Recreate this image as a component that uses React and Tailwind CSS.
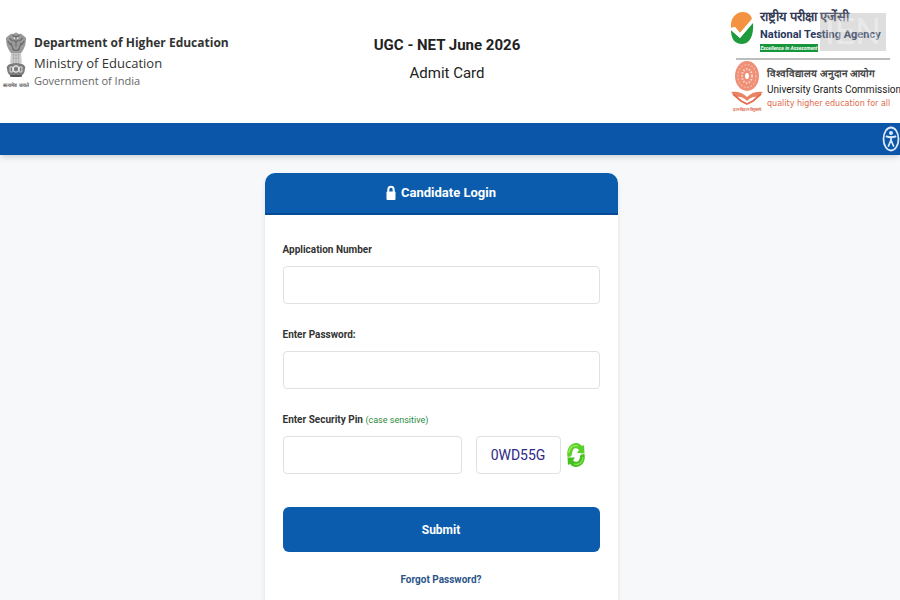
import { useState } from "react";

const captchaCode = "0WD55G";

const Emblem = () => (
  <svg viewBox="0 0 26 46" className="h-[46px] w-[22px]" preserveAspectRatio="none" aria-hidden="true">
    <path d="M5 3 Q8 1 10 2 Q13 -1 16 2 Q19 1 21 3 L25 6 L24 13 Q22 18 19 21 L7 21 Q4 18 2 13 L1 6Z" fill="#9a9a9a" />
    <path d="M9 3 Q13 7 17 3 M5 6 L9 9 M21 6 L17 9 M10 8 Q13 11 16 8 M13 10 V15 M7 11 L10 18 M19 11 L16 18 M3 9 L7 13 M23 9 L19 13" fill="none" stroke="#686868" strokeWidth="1.2" />
    <path d="M9 17 Q13 20 17 17" fill="none" stroke="#666" strokeWidth="1.2" />
    <circle cx="11" cy="6" r="1" fill="#ddd" />
    <circle cx="15" cy="6" r="1" fill="#ddd" />
    <path d="M7 21 H19 L20 31 H6Z" fill="#cfcfcf" />
    <path d="M8 23 H18 M9 26 H17 M10 21 V31 M13 21 V31 M16 21 V31" stroke="#a8a8a8" strokeWidth="0.8" />
    <path d="M2 35 Q4 31 13 31 Q22 31 24 35 L23 40 Q21 45 13 45 Q5 45 3 40Z" fill="#7c7c7c" />
    <circle cx="13" cy="37" r="3.2" fill="none" stroke="#eee" strokeWidth="1.2" />
    <path d="M6 35 H9 V40 H6Z M17 35 H20 V40 H17Z" fill="none" stroke="#e5e5e5" strokeWidth="1" />
    <path d="M6 44 H20" stroke="#444" strokeWidth="1.5" />
  </svg>
);

const NtaLogo = () => (
  <svg viewBox="0 0 24 34" className="h-[34px] w-6 shrink-0" aria-hidden="true">
    <path d="M1 17 C0 7 6 1 13 1 C18 1 21 4 22 8 L10 22 L5 16Z" fill="#f39342" />
    <path d="M1 19 L10 27 L23 12 C24 24 20 33 12 33 C5 33 1 28 1 19Z" fill="#1f9a3d" />
    <path d="M1 17 L5 16 L10 22 L22 8 L23 11 L10 27 L1 19Z" fill="#fff" />
  </svg>
);

const UgcLogo = () => (
  <svg viewBox="0 0 34 46" className="h-[46px] w-[34px] shrink-0" aria-hidden="true">
    <ellipse cx="17" cy="16" rx="12" ry="15" fill="#ee8f76" />
    <ellipse cx="17" cy="16" rx="9" ry="11.5" fill="none" stroke="#f6b9a8" strokeWidth="1.2" strokeDasharray="2 1.5" />
    <ellipse cx="17" cy="16" rx="5" ry="7" fill="none" stroke="#fad3c8" strokeWidth="2" strokeDasharray="1.5 1.5" />
    <ellipse cx="17" cy="16" rx="2" ry="3" fill="#fff" />
    <path d="M1 32 Q11 31 17 37 Q23 31 33 32 L28 37 Q22 36 17 41 Q12 36 6 37Z" fill="#ea8266" />
    <path d="M3 34 L11 41 L17 44 L23 41 L31 34" fill="none" stroke="#e56a4c" strokeWidth="1.8" />
  </svg>
);

const AccessIcon = () => (
  <svg viewBox="0 0 18 26" className="h-[26px] w-[18px]" aria-hidden="true">
    <ellipse cx="9" cy="13" rx="7.5" ry="11.5" fill="none" stroke="#dce9f7" strokeWidth="1.8" />
    <circle cx="9" cy="7" r="2" fill="#dce9f7" />
    <path d="M4.5 10.5 L9 11.5 L13.5 10.5 M9 11 V15 M9 14 L6.5 20 M9 14 L11.5 20" fill="none" stroke="#dce9f7" strokeWidth="1.8" strokeLinecap="round" />
  </svg>
);

const LockIcon = () => (
  <svg viewBox="0 0 10 16" className="h-4 w-[10px]" aria-hidden="true">
    <path d="M2.3 8 V5 C2.3 0.8 7.7 0.8 7.7 5 V8" fill="none" stroke="#fff" strokeWidth="2" />
    <rect x="0.5" y="6.5" width="9" height="8.5" rx="1" fill="#fff" />
  </svg>
);

const RefreshIcon = () => (
  <svg viewBox="0 0 18 26" className="h-[26px] w-[18px]" aria-hidden="true">
    <path d="M0.5 15 C-1 6 4 0.5 10 1 Q13 1.5 15 4 L17 3 L17.5 11.5 L10 11 L12 8 C9 5 5 6 5 12 L4 14.5Z" fill="#5bd02c" />
    <path d="M17.5 12 C19 20 14 25.5 8 25 Q5 24.5 3 22 L1 23 L0.5 15.5 L8 15.5 L6 18.5 C9 21 13 20 13 14 L14 12.5Z" fill="#45c01f" />
    <path d="M2 11 C2 6 6 2.5 11 4" fill="none" stroke="#9aee62" strokeWidth="1.3" />
    <path d="M16 15 C16 20 12 23.5 7 22" fill="none" stroke="#86e650" strokeWidth="1.2" />
  </svg>
);

const inputClass =
  "h-[38px] w-full rounded border border-[#dfe1e4] bg-white px-3 text-base outline-none focus:border-[#0b5cad]";
const labelClass = "text-[10px] leading-4 font-bold text-[#333]";

const App = () => {
  const [formData, setFormData] = useState({
    applicationNumber: "",
    password: "",
    pin: "",
  });

  const handleChange = (e) => {
    const { name, value } = e.target;

    setFormData((prev) => ({
      ...prev,
      [name]: value,
    }));
  };

  const handleSubmit = (e) => {
    e.preventDefault();
  };

  return (
    <div className="min-h-screen bg-[#f6f8fa] font-[Roboto,'Liberation_Sans',sans-serif]">
      <header className="flex items-start justify-between bg-white pb-[9px]">
        <div className="flex flex-1 items-start gap-1 pt-8 pl-[3px]">
          <div className="flex w-[26px] flex-col items-center">
            <Emblem />
            <span className="text-[5px] leading-[14px] font-bold whitespace-nowrap text-[#555]">सत्यमेव जयते</span>
          </div>
          <div className="pl-px font-['Open_Sans',sans-serif] whitespace-nowrap text-[#333]">
            <p className="text-xs leading-[22px] font-bold">Department of Higher Education</p>
            <p className="text-[13px] leading-[18px]">Ministry of Education</p>
            <p className="text-[11px] leading-[18px] text-[#666]">Government of India</p>
          </div>
        </div>

        <div className="pt-8 pr-[9px] text-center text-[#222]">
          <h1 className="text-[15px] leading-[26px] font-bold">UGC - NET June 2026</h1>
          <p className="text-[15px] leading-[30px]">Admit Card</p>
        </div>

        <div className="flex flex-1 justify-end pt-2">
          <div className="w-[170px] whitespace-nowrap">
            <div className="relative flex h-[50px] items-start gap-[6px]">
              <div className="pt-[3px]">
                <NtaLogo />
              </div>
              <div>
                <p className="text-[13px] leading-[17px] font-bold text-[#333a55]">राष्ट्रीय परीक्षा एजेंसी</p>
                <p className="text-[11px] leading-[19px] font-bold text-[#28395f]">National Testing Agency</p>
                <p className="w-[58px] bg-[#17953b] text-center text-[5px] leading-2 font-bold text-white italic">
                  Excellence in Assessment
                </p>
              </div>
              <span className="absolute top-[5px] right-[14px] h-[38px] w-[66px] bg-neutral-400/35 text-center text-4xl leading-[38px] text-white/35">
                IEN
              </span>
            </div>
            <div className="mr-[10px] ml-1.5 h-0.5 bg-[#bdbdbd]" />
            <div className="flex items-start gap-[3px]">
              <div className="flex w-[34px] shrink-0 flex-col items-center">
                <UgcLogo />
                <span className="text-[4px] leading-2 font-bold text-[#e0694c]">ज्ञान-विज्ञान विमुक्तये</span>
              </div>
              <div className="pt-[5px]">
                <p className="text-[10px] leading-[17px] font-bold text-[#444]">विश्वविद्यालय अनुदान आयोग</p>
                <p className="text-[10px] leading-4 text-[#222]">University Grants Commission</p>
                <p className="font-['DejaVu_Sans',sans-serif] text-[8px] leading-3 text-[#e0694c]">quality higher education for all</p>
              </div>
            </div>
          </div>
        </div>
      </header>

      <nav className="flex h-8 items-center justify-end bg-[#0b56a8] shadow-md">
        <button type="button" aria-label="Accessibility options">
          <AccessIcon />
        </button>
      </nav>

      <main className="flex justify-center pt-[18px] pr-[18px]">
        <section className="w-full max-w-[353px] overflow-hidden rounded-t-[10px] bg-white shadow-md">
          <h2 className="flex h-[42px] items-center justify-center gap-[5px] border-b-2 border-[#084a96] bg-[#0b5cad] text-[13px] font-bold text-white">
            <LockIcon />
            Candidate Login
          </h2>

          <form onSubmit={handleSubmit} className="px-[18px] pt-[27px] pb-6">
            <div className="flex flex-col gap-2">
              <label htmlFor="applicationNumber" className={labelClass}>
                Application Number
              </label>
              <input id="applicationNumber" name="applicationNumber" type="text" value={formData.applicationNumber} onChange={handleChange} className={inputClass} />
            </div>

            <div className="mt-[23px] flex flex-col gap-2">
              <label htmlFor="password" className={labelClass}>
                Enter Password:
              </label>
              <input id="password" name="password" type="password" value={formData.password} onChange={handleChange} className={inputClass} />
            </div>

            <div className="mt-[23px] flex flex-col gap-2">
              <label htmlFor="pin" className={labelClass}>
                Enter Security Pin <span className="text-[9px] font-normal text-[#2e8b3d]">(case sensitive)</span>
              </label>
              <div className="flex items-center">
                <div className="flex-1">
                  <input id="pin" name="pin" type="text" value={formData.pin} onChange={handleChange} className={inputClass} />
                </div>
                <div className="ml-[14px] flex h-[38px] w-[85px] items-center justify-center rounded border border-[#dfe1e4] text-sm text-[#2d2a86]">
                  {captchaCode}
                </div>
                <button type="button" aria-label="Refresh security pin" className="mr-[15px] ml-[6px]">
                  <RefreshIcon />
                </button>
              </div>
            </div>

            <button type="submit" className="mt-[33px] h-[45px] w-full rounded-md bg-[#0b5cad] text-xs font-bold text-white">
              Submit
            </button>

            <p className="mt-5 text-center text-[10px] leading-4 font-bold">
              <a href="#forgot" className="text-[#2b5488]">
                Forgot Password?
              </a>
            </p>
          </form>
        </section>
      </main>
    </div>
  );
};

export default App;
